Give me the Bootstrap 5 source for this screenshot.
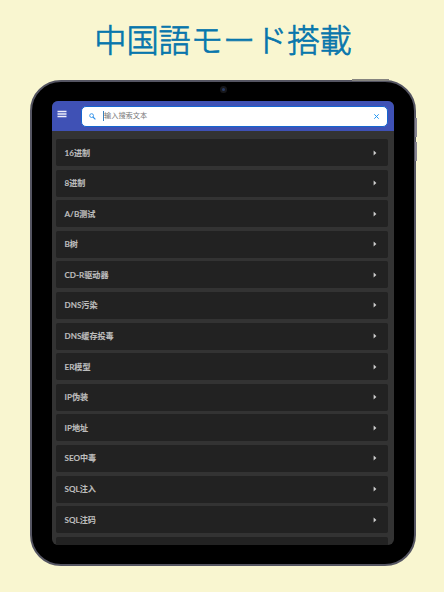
<!DOCTYPE html>
<html lang="zh-CN">
<head>
<meta charset="utf-8">
<meta name="viewport" content="width=device-width, initial-scale=1">
<title>中国語モード搭載</title>
<link rel="stylesheet" href="https://cdn.jsdelivr.net/npm/bootstrap@5.3.0/dist/css/bootstrap.min.css">
<style>
body{width:444px;height:592px;background:#f9f6d0;font-family:Lato,"Noto Sans CJK SC",sans-serif}
.headline{height:80px;padding-left:2px;font:300 32.2px/77px "Noto Sans CJK JP",sans-serif;color:#0876ac;-webkit-text-stroke:.75px #0876ac;stroke-linejoin:round}
.tablet{width:386px;height:486px;margin-left:30px;background:#000;border:2px solid #555562;border-radius:31px;padding:19px 20px 19px}
.side-key{width:2px;background:#85828f;right:-3px}
.key-a{top:36px;height:19px}
.key-b{top:60px;height:19px}
.key-top{height:2px;width:37px;top:-3px;left:320px;background:#85847f}
.camera{width:7px;height:7px;left:187.5px;top:4px;background:#273a63;border:2.5px solid #18181b}
.screen{height:444px;background:#333;border-radius:6px}
.topbar{height:30px;background:#3f51b5;padding:0 6px 0 5px}
.menu-icon{width:10px;height:8px;margin-top:-4px}
.search-box{height:21px;width:307px;background:#fff;border:1px solid #1565cf;border-radius:5px;padding:0 7px 0 7px;font-size:7.2px;color:#777}
.search-icon{width:7px;height:7px;margin-right:7px;margin-top:1px}
.caret{width:1px;height:10px;background:#3a82c0}
.entries{padding:8px 6px 0 4px;gap:3.6px}
.entry{height:27px;flex:none;background:#222;border-radius:2px;padding:0 11.5px 0 8.5px;font-size:8.1px;font-weight:700;line-height:27px;color:#bdbdbd}
.entry span{padding-top:1px;-webkit-text-stroke:.1px #bdbdbd}
</style>
<script src="https://cdn.jsdelivr.net/npm/bootstrap@5.3.0/dist/js/bootstrap.bundle.min.js"></script>
</head>
<body class="m-0 overflow-hidden">
<h1 class="headline text-center m-0" lang="ja">中国語モード搭載</h1>
<main class="tablet position-relative">
  <span class="key-top position-absolute"></span>
  <span class="side-key key-a position-absolute"></span>
  <span class="side-key key-b position-absolute"></span>
  <span class="camera position-absolute rounded-circle"></span>
  <div class="screen overflow-hidden d-flex flex-column">
    <header class="topbar d-flex align-items-center justify-content-between flex-shrink-0">
      <svg class="menu-icon" viewBox="0 0 10 8"><path d="M.5 1.5h9M.5 4h9M.5 6.5h9" stroke="#eeeefa" stroke-width="1.4"/></svg>
      <div class="search-box d-flex align-items-center">
        <svg class="search-icon" viewBox="0 0 7 7" fill="none" stroke="#2c8ee8"><circle cx="2.6" cy="2.6" r="1.9" stroke-width=".9"/><path d="M4 4l2.4 2.4" stroke-width="1.1"/></svg>
        <span class="caret"></span><span>输入搜索文本</span>
        <svg class="ms-auto" width="7" height="7" viewBox="0 0 7 7"><path d="M1.3 1.3l4.4 4.4M5.7 1.3L1.3 5.7" stroke="#2196f3" stroke-width="1"/></svg>
      </div>
    </header>
    <div class="entries d-flex flex-column" id="entries"></div>
  </div>
</main>
<script>
const names=["16进制","8进制","A/B测试","B树","CD-R驱动器","DNS污染","DNS缓存投毒","ER模型","IP伪装","IP地址","SEO中毒","SQL注入","SQL注码",""];
document.getElementById("entries").innerHTML=names.map(n=>`<div class="entry d-flex align-items-center justify-content-between"><span>${n}</span>${n?'<svg width="4" height="6" viewBox="0 0 4 6"><path d="M.6.5L3.4 3 .6 5.5z" fill="#d0d0d0"/></svg>':''}</div>`).join("");
</script>
</body>
</html>
